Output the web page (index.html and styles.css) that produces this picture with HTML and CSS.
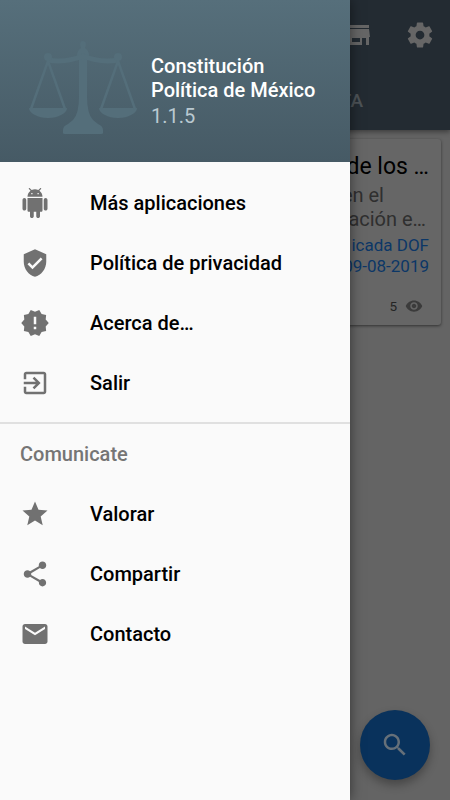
FILE: index.html
```html
<!DOCTYPE html>
<html lang="es">
<head>
<meta charset="utf-8">
<title>Constitución Política de México</title>
<link rel="stylesheet" href="styles.css">
</head>
<body>
<div class="screen">
  <div class="app">
    <header class="appbar">
      <div class="actions">
        <svg class="store" viewBox="0 0 25 21"><path d="M1 0h22v3H1zM1 4h22l1 8h-1v8h-3v-7h-4v7H2v-8H0zM6 13v4h8v-4z" fill-rule="evenodd"/></svg>
        <svg class="gear" viewBox="0 0 24 24"><path d="M19.43 12.98c.04-.32.07-.64.07-.98s-.03-.66-.07-.98l2.11-1.65c.19-.15.24-.42.12-.64l-2-3.46c-.12-.22-.39-.3-.61-.22l-2.49 1c-.52-.4-1.08-.73-1.69-.98l-.38-2.65C14.46 2.18 14.25 2 14 2h-4c-.25 0-.46.18-.49.42l-.38 2.65c-.61.25-1.17.59-1.69.98l-2.49-1c-.23-.09-.49 0-.61.22l-2 3.46c-.13.22-.07.49.12.64l2.11 1.65c-.04.32-.07.65-.07.98s.03.66.07.98l-2.11 1.65c-.19.15-.24.42-.12.64l2 3.46c.12.22.39.3.61.22l2.49-1c.52.4 1.08.73 1.69.98l.38 2.65c.03.24.24.42.49.42h4c.25 0 .46-.18.49-.42l.38-2.65c.61-.25 1.17-.59 1.69-.98l2.49 1c.23.09.49 0 .61-.22l2-3.46c.12-.22.07-.49-.12-.64l-2.11-1.65zM12 15.5c-1.93 0-3.5-1.57-3.5-3.5s1.57-3.5 3.5-3.5 3.5 1.57 3.5 3.5-1.57 3.5-3.5 3.5z"/></svg>
      </div>
      <div class="tab">TA</div>
    </header>
    <article class="card">
      <h2 class="card-title">de los …</h2>
      <p class="card-text"><span>en el</span><span>ación e…</span></p>
      <p class="card-date"><span>icada DOF</span><span>09-08-2019</span></p>
      <div class="views">5
        <svg viewBox="0 0 24 24"><path d="M12 4.5C7 4.5 2.73 7.61 1 12c1.73 4.39 6 7.5 11 7.5s9.27-3.11 11-7.5c-1.730-4.390-6-7.500-11-7.500zM12 17c-2.760 0-5-2.240-5-5s2.240-5 5-5 5 2.240 5 5-2.240 5-5 5zm0-8c-1.660 0-3 1.340-3 3s1.340 3 3 3 3-1.340 3-3-1.340-3-3-3z"/></svg>
      </div>
    </article>
  </div>
  <div class="fab">
    <svg viewBox="0 0 24 24"><path d="M15.500 14h-.79l-.28-.27C15.410 12.590 16 11.110 16 9.500 16 5.910 13.090 3 9.500 3S3 5.910 3 9.500 5.910 16 9.500 16c1.610 0 3.090-.59 4.230-1.570l.27.28v.79l5 4.990L20.490 19l-4.990-5zm-6 0C7.010 14 5 11.990 5 9.500S7.010 5 9.500 5 14 7.010 14 9.500 11.990 14 9.500 14z"/></svg>
  </div>
  <aside class="drawer">
    <div class="drawer-head">
      <svg class="scales" viewBox="0 0 110 96">
        <path class="solid" d="M55 1q3 0 3 4l-1 3q4 3 4 7l-2 5v36q0 18 6 24l5 4q5 2 5 6v3q0 1-2 1H37q-2 0-2-1v-3q0-4 5-6l5-4q6-6 6-24V20l-2-5q0-4 4-7l-1-3q0-4 3-4zM1 68h38q0 4-6 7-5 3-13 3t-13-3q-6-3-6-7zM71 68h38q0 4-6 7-5 3-13 3t-13-3q-6-3-6-7z"/>
        <path class="beam" d="M20 20q18 3 35-4 17 7 35 4"/>
        <path class="chain" d="M3 69l17-48 17 48M73 69l17-48 17 48"/>
        <circle class="solid" cx="20" cy="17" r="4"/><circle class="solid" cx="90" cy="17" r="4"/>
      </svg>
      <div class="identity">
        <h1>Constitución<br>Política de México</h1>
        <span class="version">1.1.5</span>
      </div>
    </div>
    <nav class="menu">
      <a class="item"><svg viewBox="0 0 24 24"><path d="M6 18c0 .55.45 1 1 1h1v3.500c0 .83.67 1.500 1.500 1.500s1.500-.67 1.500-1.500V19h2v3.500c0 .83.67 1.500 1.500 1.500s1.500-.67 1.500-1.500V19h1c.55 0 1-.45 1-1V8H6v10zM3.500 8C2.670 8 2 8.670 2 9.500v7c0 .83.67 1.500 1.500 1.500S5 17.330 5 16.500v-7C5 8.670 4.330 8 3.500 8zm17 0c-.83 0-1.500.67-1.500 1.500v7c0 .83.67 1.500 1.500 1.500s1.500-.67 1.500-1.500v-7c0-.83-.67-1.500-1.500-1.500zm-4.970-5.840l1.300-1.300c.2-.2.2-.51 0-.71-.2-.2-.51-.2-.71 0l-1.480 1.480C13.850 1.230 12.950 1 12 1c-.96 0-1.860.23-2.660.63L7.850.15c-.2-.2-.51-.2-.71 0-.2.2-.2.51 0 .71l1.310 1.310C6.970 3.260 6 5.010 6 7h12c0-1.990-.97-3.750-2.470-4.840zM10 5H9V4h1v1zm5 0h-1V4h1v1z"/></svg>Más aplicaciones</a>
      <a class="item"><svg viewBox="0 0 24 24"><path d="M12 1L3 5v6c0 5.550 3.840 10.740 9 12 5.160-1.260 9-6.450 9-12V5l-9-4zm-2 16l-4-4 1.410-1.410L10 14.170l6.590-6.590L18 9l-8 8z"/></svg>Política de privacidad</a>
      <a class="item"><svg viewBox="0 0 24 24"><path d="M23 12l-2.440-2.780.34-3.680-3.610-.82-1.890-3.180L12 3 8.600 1.540 6.710 4.720l-3.610.81.34 3.680L1 12l2.440 2.780-.34 3.690 3.610.82 1.890 3.180L12 21l3.400 1.460 1.890-3.180 3.610-.82-.34-3.680L23 12zm-10 5h-2v-2h2v2zm0-4h-2V7h2v6z"/></svg>Acerca de…</a>
      <a class="item"><svg viewBox="0 0 24 24"><path d="M10.090 15.590L11.500 17l5-5-5-5-1.410 1.410L12.670 11H3v2h9.670l-2.580 2.590zM19 3H5c-1.110 0-2 .9-2 2v4h2V5h14v14H5v-4H3v4c0 1.100.89 2 2 2h14c1.100 0 2-.9 2-2V5c0-1.100-.9-2-2-2z"/></svg>Salir</a>
    </nav>
    <nav class="menu contact">
      <h2 class="subheader">Comunicate</h2>
      <a class="item"><svg viewBox="0 0 24 24"><path d="M12 17.270L18.180 21l-1.640-7.030L22 9.240l-7.190-.61L12 2 9.190 8.630 2 9.240l5.460 4.730L5.820 21z"/></svg>Valorar</a>
      <a class="item"><svg viewBox="0 0 24 24"><path d="M18 16.080c-.76 0-1.440.3-1.960.77L8.910 12.700c.05-.23.09-.46.09-.7s-.04-.47-.09-.7l7.050-4.110c.54.5 1.250.81 2.040.81 1.660 0 3-1.340 3-3s-1.340-3-3-3-3 1.340-3 3c0 .24.04.47.09.7L8.040 9.810C7.500 9.310 6.790 9 6 9c-1.660 0-3 1.340-3 3s1.340 3 3 3c.79 0 1.500-.31 2.040-.81l7.120 4.160c-.05.21-.08.43-.08.65 0 1.610 1.310 2.920 2.920 2.920s2.920-1.310 2.920-2.920-1.310-2.920-2.920-2.920z"/></svg>Compartir</a>
      <a class="item"><svg viewBox="0 0 24 24"><path d="M20 4H4c-1.100 0-1.990.9-1.990 2L2 18c0 1.100.9 2 2 2h16c1.100 0 2-.9 2-2V6c0-1.100-.9-2-2-2zm0 4l-8 5-8-5V6l8 5 8-5v2z"/></svg>Contacto</a>
    </nav>
  </aside>
</div>
</body>
</html>
```
FILE: styles.css
```css
* { box-sizing: border-box; }
body { margin: 0; font-family: Roboto, "Liberation Sans", sans-serif; }
h1, h2, p { margin: 0; font-weight: 400; }
svg { display: block; fill: currentColor; flex: none; }

.screen { position: relative; width: 450px; height: 800px; overflow: hidden; background: #646464; }

.app { display: flex; flex-direction: column; }
.appbar {
  height: 130px;
  background: #232b32;
  color: #666;
  box-shadow: 0 2px 5px rgba(0, 0, 0, .4);
}
.actions { display: flex; justify-content: flex-end; align-items: center; gap: 34px; height: 70px; padding-right: 15px; }
.store { width: 25px; height: 21px; }
.gear { width: 30px; height: 30px; }
.tab { padding: 20px 87px 0 0; text-align: right; font-size: 19px; line-height: 22px; font-weight: 500; color: #4d5357; }

.card {
  height: 186px;
  margin: 9px 9px 0 10px;
  padding: 12px 12px 0;
  border-radius: 3px;
  background: #666;
  box-shadow: 0 1px 3px rgba(0, 0, 0, .5);
  text-align: right;
}
.card-title { font-size: 23px; line-height: 32px; color: #000; }
.card-text { font-size: 20px; line-height: 24px; color: #2f2f2f; }
.card-date { padding-top: 4px; font-size: 17px; line-height: 21px; color: #0c3767; }
.card-text span, .card-date span { display: block; }
.card-text span:first-child { padding-right: 45px; }
.card-text span:last-child { padding-right: 3px; }
.views { display: flex; justify-content: flex-end; align-items: center; gap: 8px; padding: 20px 6px 0 0; font-size: 13.500px; line-height: 18px; color: #242424; }
.views svg { width: 18px; height: 18px; color: #3b3b3b; }

.fab {
  position: absolute;
  right: 20px;
  bottom: 20px;
  display: flex;
  align-items: center;
  justify-content: center;
  width: 70px;
  height: 70px;
  border-radius: 50%;
  background: #09325c;
  color: #667079;
  box-shadow: 0 5px 10px rgba(0, 0, 0, .3);
}
.fab svg { width: 30px; height: 30px; }

.drawer {
  position: absolute;
  top: 0;
  left: 0;
  width: 350px;
  height: 100%;
  background: #fafafa;
  box-shadow: 0 0 12px rgba(0, 0, 0, .5);
}
.drawer-head {
  display: flex;
  height: 162px;
  padding: 40px 0 0 28px;
  background: linear-gradient(#566f7b, #465a65);
}
.scales { width: 110px; height: 96px; color: #546e7a; }
.scales .beam { fill: none; stroke: currentColor; stroke-width: 5; }
.scales .chain { fill: none; stroke: currentColor; stroke-width: 2.500; }
.identity { padding: 14px 0 0 13px; white-space: nowrap; }
.identity h1 { font-size: 20px; line-height: 24px; font-weight: 500; color: #fff; }
.version { display: block; font-size: 20px; line-height: 28px; color: #b9c9d1; }

.menu { padding: 11px 0 9px; }
.contact { border-top: 2px solid #e0e0e0; padding: 0; }
.subheader { padding-left: 20px; font-size: 20px; line-height: 60px; font-weight: 500; color: #757575; }
.item { display: flex; align-items: center; gap: 40px; height: 60px; padding-left: 20px; font-size: 20px; font-weight: 500; color: #000; }
.item svg { width: 30px; height: 30px; color: #717171; }
```
